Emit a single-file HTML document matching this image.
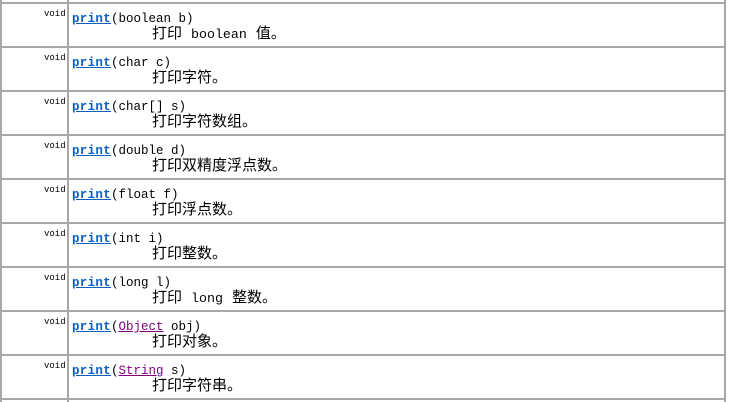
<!DOCTYPE html>
<html><head><meta charset="utf-8"><style>
body{margin:0;width:732px;height:402px;background:#fff;position:relative;overflow:hidden;font-family:"Liberation Mono","Noto Sans CJK SC",monospace}
.h{position:absolute;left:0;width:726px;height:2px;background:#a8a8a8}
.v{position:absolute;top:0;height:402px;width:2px;background:#a8a8a8}
.void{position:absolute;left:44px;font-size:9px;color:#000;font-family:"Liberation Mono",monospace}
.sig{position:absolute;left:72px;font-size:12.5px;color:#000;white-space:pre;line-height:14px}
.sig b{color:#0b5fbf;text-decoration:underline;letter-spacing:0.3px}
.sig a{color:#800080;text-decoration:underline}
.d{position:absolute;left:152px;font-size:15px;white-space:pre;line-height:17px;font-family:"Liberation Mono","Noto Sans CJK SC",monospace}
.d span{font-size:13.3px}
</style></head><body>
<div class="v" style="left:0"></div>
<div class="v" style="left:67px"></div>
<div class="v" style="left:724px"></div>
<div class="h" style="top:2px"></div>
<div class="h" style="top:46px"></div>
<div class="h" style="top:90px"></div>
<div class="h" style="top:134px"></div>
<div class="h" style="top:178px"></div>
<div class="h" style="top:222px"></div>
<div class="h" style="top:266px"></div>
<div class="h" style="top:310px"></div>
<div class="h" style="top:354px"></div>
<div class="h" style="top:398px"></div>

<div class="void" style="top:9px">void</div><div class="sig" style="top:12px"><b>print</b>(boolean b)</div><div class="d" style="top:26px">打印 <span>boolean</span> 值。</div>
<div class="void" style="top:53px">void</div><div class="sig" style="top:56px"><b>print</b>(char c)</div><div class="d" style="top:70px">打印字符。</div>
<div class="void" style="top:97px">void</div><div class="sig" style="top:100px"><b>print</b>(char[] s)</div><div class="d" style="top:114px">打印字符数组。</div>
<div class="void" style="top:141px">void</div><div class="sig" style="top:144px"><b>print</b>(double d)</div><div class="d" style="top:158px">打印双精度浮点数。</div>
<div class="void" style="top:185px">void</div><div class="sig" style="top:188px"><b>print</b>(float f)</div><div class="d" style="top:202px">打印浮点数。</div>
<div class="void" style="top:229px">void</div><div class="sig" style="top:232px"><b>print</b>(int i)</div><div class="d" style="top:246px">打印整数。</div>
<div class="void" style="top:273px">void</div><div class="sig" style="top:276px"><b>print</b>(long l)</div><div class="d" style="top:290px">打印 <span>long</span> 整数。</div>
<div class="void" style="top:317px">void</div><div class="sig" style="top:320px"><b>print</b>(<a>Object</a> obj)</div><div class="d" style="top:334px">打印对象。</div>
<div class="void" style="top:361px">void</div><div class="sig" style="top:364px"><b>print</b>(<a>String</a> s)</div><div class="d" style="top:378px">打印字符串。</div>
</body></html>
